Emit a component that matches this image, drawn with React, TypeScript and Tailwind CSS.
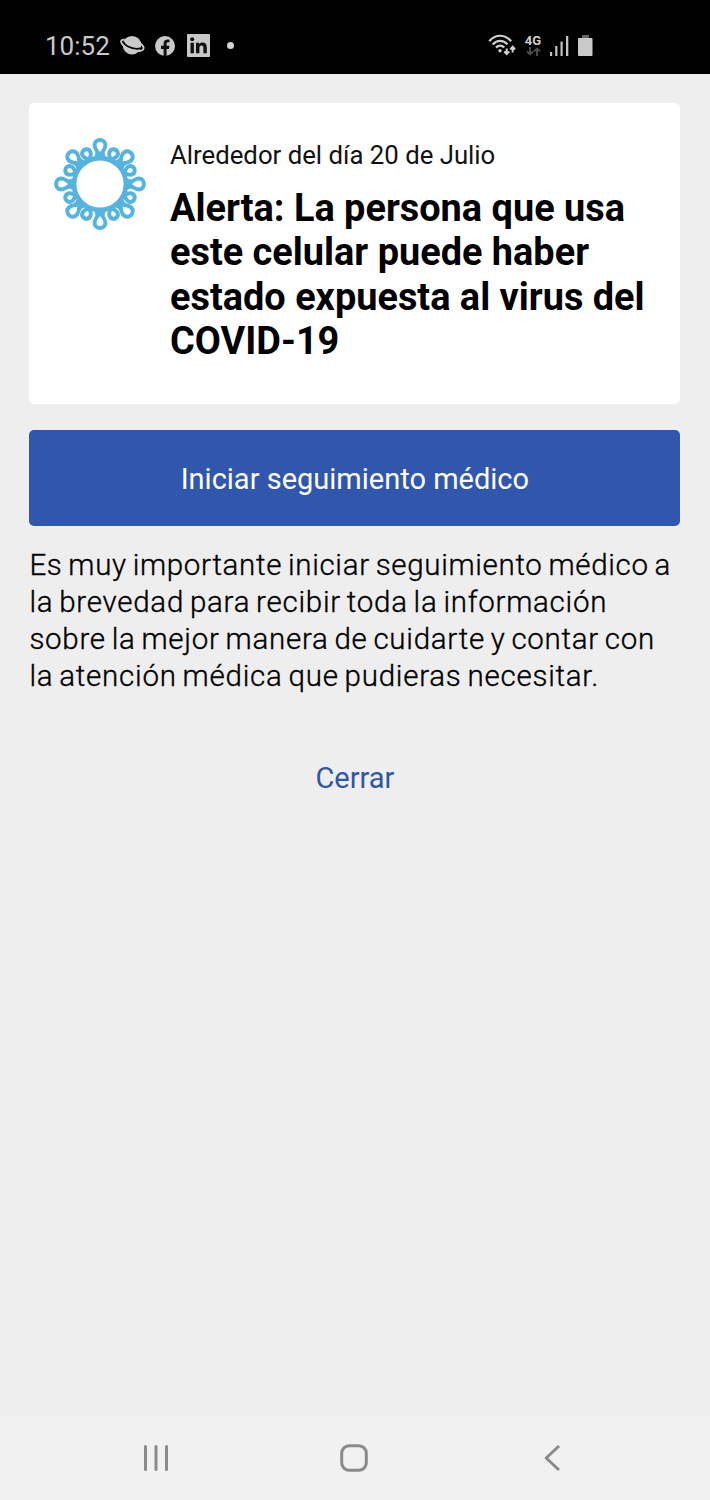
import type { ReactNode } from 'react';

const longSpikes = [0, 45, 90, 135, 180, 225, 270, 315];
const shortSpikes = [24, 66, 114, 156, 204, 246, 294, 336];

function VirusIcon() {
  return (
    <svg className="size-[100px]" viewBox="-50 -50 100 100" fill="#55b3df" fillRule="evenodd">
      <circle r="25.8" fill="none" stroke="#55b3df" strokeWidth="4.4" />
      {longSpikes.map((angle) => (
        <path
          key={angle}
          transform={`rotate(${angle})`}
          d="M-8.5 -24.5C-5 -27.5-4.2 -30-5 -32.4C-5.7 -34.3-7.4 -36-7.4 -39A7.4 6.9 0 0 1 7.4 -39C7.4 -36 5.7 -34.3 5 -32.4C4.2 -30 5 -27.5 8.5 -24.5ZM0 -32C-1.5 -34-3.4 -36-3.4 -38.7A3.4 3.2 0 0 1 3.4 -38.7C3.4 -36 1.5 -34 0 -32Z"
        />
      ))}
      {shortSpikes.map((angle) => (
        <path
          key={angle}
          transform={`rotate(${angle})`}
          d="M-5 -25C-4 -27-4 -28.3-5 -29.5C-5.8 -30.5-6.3 -32-6.3 -33.6A6.3 6 0 0 1 6.3 -33.6C6.3 -32 5.8 -30.5 5 -29.5C4 -28.3 4 -27 5 -25ZM0 -29.6C-1.2 -30.5-2.3 -31.8-2.3 -33.3A2.3 2.3 0 0 1 2.3 -33.3C2.3 -31.8 1.2 -30.5 0 -29.6Z"
        />
      ))}
    </svg>
  );
}

function PlanetIcon() {
  return (
    <svg className="h-[24px] w-[26px]" viewBox="0 0 26 24" fill="none">
      <circle cx="12" cy="11.2" r="9.3" fill="#c9c9c9" />
      <path d="M3.2 7.4C4.5 12.2 14 16.4 21 14.1" stroke="#000" strokeWidth="1.8" />
      <path d="M4 5.6C-.5 5.8 .3 10 6.5 13.7C13.5 18 23 18.2 23.6 14.4C23.9 12.6 22.5 10.9 20.3 9.4" stroke="#c9c9c9" strokeWidth="1.8" strokeLinecap="round" />
    </svg>
  );
}

function FacebookIcon() {
  return (
    <svg className="size-[20px]" viewBox="0 0 20 20">
      <circle cx="10" cy="10" r="10" fill="#c9c9c9" />
      <path d="M8.6 20v-7.1H6V9.8h2.6V7.6c0-2.7 1.6-4.1 4-4.1 1.1 0 1.9.1 1.9.1v2.6h-1.3c-1.1 0-1.6.7-1.6 1.5v2.1h2.8l-.5 3.1h-2.3V20Z" fill="#111" />
    </svg>
  );
}

function LinkedinIcon() {
  return (
    <svg className="size-[23px]" viewBox="0 0 23 23">
      <rect width="23" height="23" rx="1" fill="#c9c9c9" />
      <g fill="#111">
        <circle cx="5.2" cy="5.3" r="2" />
        <path d="M3.5 8.8h3.4v10.5H3.5zM9 8.8h3.2v1.5c.7-1.2 1.8-1.8 3.3-1.8 3 0 4.3 1.7 4.3 5v5.8h-3.4v-5.3c0-1.7-.5-2.6-1.8-2.6-1.5 0-2.2 1-2.2 2.7v5.2H9z" />
      </g>
    </svg>
  );
}

function WifiIcon() {
  return (
    <svg className="h-[24px] w-[28px]" viewBox="0 0 28 24" fill="none" stroke="#cfcfcf">
      <path d="M1.2 7.2C7.5-.1 16.8-.1 23.2 7.2M4.7 10.4C9 5.6 15.3 5.6 19.5 10.4M8 13.6c2.6-2.6 5.8-2.6 8.3-.1" strokeWidth="2.2" />
      <circle cx="12" cy="16.8" r="1.7" fill="#cfcfcf" stroke="none" />
      <path d="M18.7 14.5v5M16.3 17.5l2.4 2.6 2.4-2.6M24.7 18.5v-5M22.3 15.4l2.4-2.6 2.4 2.6" strokeWidth="2" />
    </svg>
  );
}

function NetworkIcon() {
  return (
    <div className="flex w-[18px] flex-col items-center">
      <span className="text-[13px] leading-[12px] font-bold text-[#cfcfcf]">4G</span>
      <svg className="h-[9px] w-[15px]" viewBox="0 0 15 9" fill="none" stroke="#505050" strokeWidth="1.8">
        <path d="M4 0v7M1 4.4l3 3 3-3M11 9V2M8 4.4l3-3 3 3" />
      </svg>
    </div>
  );
}

function StatusBar() {
  return (
    <header className="flex h-[74px] shrink-0 items-center bg-black pt-[17px] pl-[45px] text-[#c9c9c9]">
      <span className="w-[75px] text-[26px] leading-[30px] whitespace-nowrap">10:52</span>
      <PlanetIcon />
      <div className="ml-[9px]"><FacebookIcon /></div>
      <div className="ml-[12px]"><LinkedinIcon /></div>
      <span className="ml-[17px] size-[7px] rounded-full bg-[#d5d5d5]" />
      <div className="ml-[254px]"><WifiIcon /></div>
      <div className="ml-[8px]"><NetworkIcon /></div>
      <svg className="ml-[8px] h-[20px] w-[19px]" viewBox="0 0 19 20" fill="#c4c4c4">
        <path d="M0 16h2.2v4H0zM5.2 10h2.2v10H5.2zM10.5 5.5h2.2V20h-2.2zM16 0h2.3v20H16z" />
      </svg>
      <svg className="ml-[8.5px] h-[21px] w-[15px]" viewBox="0 0 15 21">
        <path d="M4 0h7v4H4z" fill="#666" />
        <rect y="3" width="14.5" height="18" rx="1" fill="#c9c9c9" />
      </svg>
    </header>
  );
}

function Line({ children, className = '' }: { children: ReactNode; className?: string }) {
  return <span className={`block whitespace-nowrap ${className}`}>{children}</span>;
}

export default function App() {
  return (
    <div className="flex h-[1500px] w-[710px] flex-col overflow-hidden bg-[#eeeeee] font-['Roboto',sans-serif] text-black">
      <StatusBar />
      <main className="flex flex-1 flex-col pr-[29.6px] pl-[29.4px] pt-[29.3px]">
        <section className="flex h-[301px] rounded-[5px] bg-white pt-[30.7px] pl-[20.6px]">
          <VirusIcon />
          <div className="ml-[20px] pt-[4px]">
            <p className="text-[25.75px] leading-[34px] whitespace-nowrap text-[#111]">Alrededor del día 20 de Julio</p>
            <h1 className="mt-[14px] text-[37.9px] leading-[44.4px] font-bold">
              <Line>Alerta: La persona que usa</Line>
              <Line>este celular puede haber</Line>
              <Line>estado expuesta al virus del</Line>
              <Line>COVID-19</Line>
            </h1>
          </div>
        </section>
        <button className="mt-[25.7px] h-[96px] rounded-[5px] bg-[#3056ae] pt-[3px] text-[29px] text-white">
          Iniciar seguimiento médico
        </button>
        <p className="mt-[21px] text-[29.5px] leading-[37px] font-light [word-spacing:-2px] text-black [-webkit-text-stroke:0.35px_#000]">
          <Line className="tracking-[0.68px]">Es muy importante iniciar seguimiento médico a</Line>
          <Line className="tracking-[0.73px]">la brevedad para recibir toda la información</Line>
          <Line className="tracking-[0.72px]">sobre la mejor manera de cuidarte y contar con</Line>
          <Line className="tracking-[0.75px]">la atención médica que pudieras necesitar.</Line>
        </p>
        <button className="mt-[63px] self-center text-[29px] leading-[40px] text-[#3056a6]">Cerrar</button>
      </main>
      <nav className="flex h-[84px] shrink-0 items-center bg-[#f1f1f1] pl-[143px]">
        <svg className="h-[28px] w-[27px]" viewBox="0 0 27 28" stroke="#8a8a8a" strokeWidth="3" strokeLinecap="round">
          <path d="M2.5 2.5v23M13 2.5v23M23.5 2.5v23" />
        </svg>
        <svg className="ml-[170px] size-[28px]" viewBox="0 0 28 28" fill="none" stroke="#8a8a8a" strokeWidth="3">
          <rect x="1.7" y="1.7" width="24.6" height="24.6" rx="7.5" />
        </svg>
        <svg className="ml-[176px] h-[28px] w-[17px]" viewBox="0 0 17 28" fill="none" stroke="#8a8a8a" strokeWidth="3">
          <path d="M15 2 2.2 14 15 26" strokeLinejoin="round" />
        </svg>
      </nav>
    </div>
  );
}
